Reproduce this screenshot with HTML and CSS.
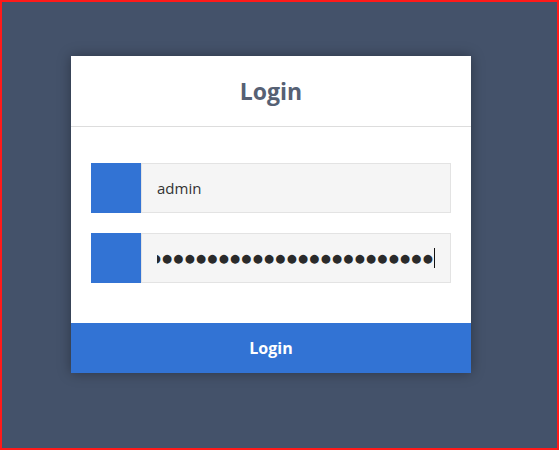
FILE: index.html
```html
<!DOCTYPE html>
<html>
<head>
    <title>Login</title>
    <link rel="stylesheet" href="styles.css">
</head>
<body>
    <div class="page">
        <div class="login-box">
            <div class="login-header">
                <h1>Login</h1>
            </div>
            <div class="login-body">
                <!-- Username -->
                <div class="field">
                    <span class="field-icon"></span>
                    <div class="field-input">admin</div>
                </div>
                <!-- Password -->
                <div class="field">
                    <span class="field-icon"></span>
                    <div class="field-input password">
                        <span class="dots">●●●●●●●●●●●●●●●●●●●●●●●●●●</span><span class="caret"></span>
                    </div>
                </div>
            </div>
            <button class="login-btn">Login</button>
        </div>
    </div>
</body>
</html>
```

FILE: styles.css
```css
* {
    margin: 0;
    padding: 0;
    box-sizing: border-box;
}
body {
    font-family: 'Open Sans', 'Noto Sans', sans-serif;
    background-color: #44526a;
}
.page {
    width: 559px;
    height: 450px;
    border: 2px solid #ff1a1a;
    padding: 54px 0 0 69px;
}
.login-box {
    width: 400px;
    background: #ffffff;
    box-shadow: 0 0 12px rgba(0, 0, 0, 0.35);
}
.login-header {
    height: 71px;
    border-bottom: 1px solid #dddddd;
    display: flex;
    align-items: center;
    justify-content: center;
}
.login-header h1 {
    font-size: 23px;
    font-weight: bold;
    color: #566174;
}
.login-body {
    padding: 36px 20px 40px;
    display: flex;
    flex-direction: column;
    gap: 20px;
}
.field {
    display: flex;
    height: 50px;
}
.field-icon {
    width: 50px;
    background: #3273d4;
}
.field-input {
    flex: 1;
    background: #f5f5f5;
    border: 1px solid #e3e3e3;
    padding: 0 15px;
    display: flex;
    align-items: center;
    font-size: 15px;
    color: #333333;
    overflow: hidden;
    white-space: nowrap;
}
.field-input.password {
    justify-content: flex-end;
}
.dots {
    min-width: 0;
    font-family: 'DejaVu Sans', sans-serif;
    font-size: 11.5px;
    letter-spacing: 1.3px;
    color: #2a2a2a;
    overflow: hidden;
    direction: rtl;
}
.caret {
    flex-shrink: 0;
    width: 1px;
    height: 20px;
    margin-left: 0;
    background: #111111;
}
.login-btn {
    display: block;
    width: 100%;
    height: 50px;
    border: none;
    background: #3273d4;
    color: #ffffff;
    font-family: 'Open Sans', 'Noto Sans', sans-serif;
    font-size: 16px;
    font-weight: bold;
}
```
